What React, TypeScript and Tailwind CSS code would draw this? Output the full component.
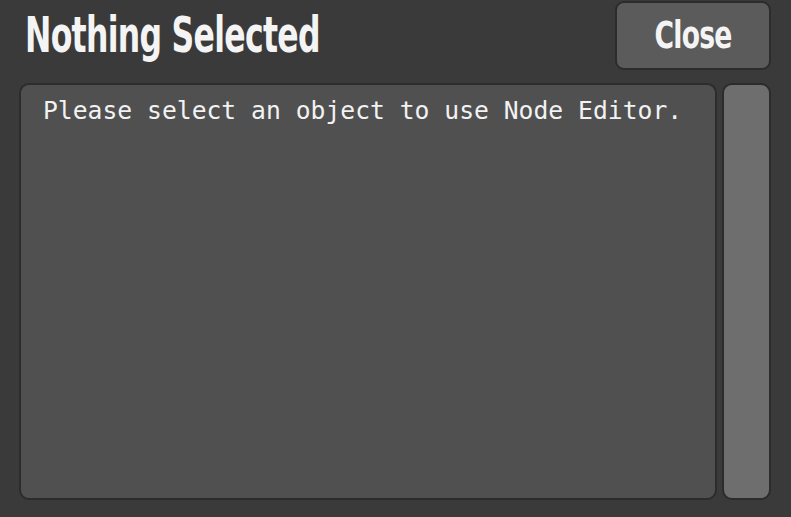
import React from 'react';

const App: React.FC = () => {
  return (
    <div className="w-[791px] h-[517px] bg-[#3a3a3a] flex flex-col pl-[19px] pr-[20px] pt-px pb-[17px] overflow-hidden">
      {/* Header */}
      <div className="flex items-start justify-between h-[69px]">
        <h1
          className="ml-[6px] mt-[6px] text-[50px] leading-[56px] font-bold text-[#f4f4f4] tracking-[-1px] origin-left scale-x-[0.7] whitespace-nowrap"
          style={{ fontFamily: '"DejaVu Sans Condensed", sans-serif' }}
        >
          Nothing Selected
        </h1>
        <button
          className="w-[156px] h-[69px] rounded-[9px] bg-[#5b5b5b] border-2 border-[#2c2c2c] flex items-center justify-center"
        >
          <span
            className="text-[37px] font-bold text-[#f4f4f4] tracking-[-1px] scale-x-[0.8] inline-block"
            style={{ fontFamily: '"DejaVu Sans Condensed", sans-serif' }}
          >
            Close
          </span>
        </button>
      </div>

      {/* Content */}
      <div className="flex flex-1 gap-[5px] mt-[13px]">
        <div className="flex-1 rounded-[10px] bg-[#505050] border-2 border-[#2c2c2c] pl-[22px] pt-[8px]">
          <p
            className="text-[24.7px] leading-[36px] text-[#f2f2f2] whitespace-nowrap"
            style={{ fontFamily: '"DejaVu Sans Mono", monospace' }}
          >
            Please select an object to use Node Editor.
          </p>
        </div>
        <div className="w-[49px] rounded-[10px] bg-[#6e6e6e] border-2 border-[#2c2c2c]" />
      </div>
    </div>
  );
};

export default App;
